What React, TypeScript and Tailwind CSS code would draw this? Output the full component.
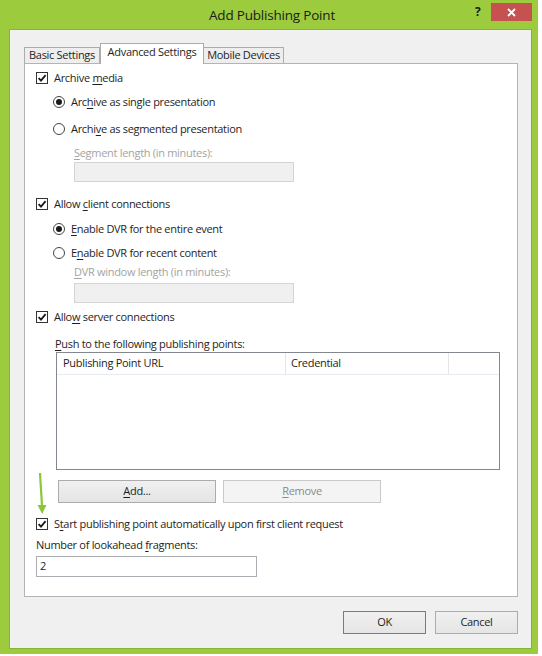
import React from 'react';

const font = "font-['Segoe_UI','Open_Sans',sans-serif] text-[11px] tracking-[-0.3px] text-[#1e1e1e]";

const CheckBox = () => (
  <span className="w-[12px] h-[12px] border border-[#333] bg-white flex items-center justify-center shrink-0">
    <svg width="10" height="10" viewBox="0 0 10 10">
      <path d="M1.6 5.2 L4 7.6 L8.6 2.2" stroke="#1a1a1a" strokeWidth="1.8" fill="none" />
    </svg>
  </span>
);

const Radio = ({ on }: { on?: boolean }) => (
  <span className="w-[12px] h-[12px] rounded-full border border-[#444] bg-white flex items-center justify-center shrink-0">
    {on && <span className="w-[6px] h-[6px] rounded-full bg-[#1a1a1a]" />}
  </span>
);

const U = ({ children }: { children: React.ReactNode }) => (
  <span className="underline underline-offset-[1.5px]">{children}</span>
);

const CheckRow = ({ mt, children }: { mt: string; children: React.ReactNode }) => (
  <div className={`${mt} h-[16px] flex items-center pl-[11px] gap-[6px]`}>
    <CheckBox />
    <span>{children}</span>
  </div>
);

const RadioRow = ({ mt, on, children }: { mt: string; on?: boolean; children: React.ReactNode }) => (
  <div className={`${mt} h-[16px] flex items-center pl-[28px] gap-[6px]`}>
    <Radio on={on} />
    <span>{children}</span>
  </div>
);

const Button = ({ children, disabled, primary, w }: { children: React.ReactNode; disabled?: boolean; primary?: boolean; w: string }) => (
  <div
    className={`${w} h-[23px] flex items-center justify-center border ${
      disabled
        ? 'border-[#c9c9c9] bg-[#f4f4f4] text-[#8a8a8a]'
        : primary
        ? 'border-[#3c8bd0] bg-gradient-to-b from-[#f0f0f0] to-[#e5e5e5]'
        : 'border-[#acacac] bg-gradient-to-b from-[#f0f0f0] to-[#e5e5e5]'
    }`}
  >
    {children}
  </div>
);

export default function App() {
  return (
    <div className={`w-[542px] h-[656px] bg-white ${font}`}>
      <div className="w-[538px] h-[654px] bg-[#9ccb3d] flex flex-col">
        {/* Title bar */}
        <div className="h-[30px] relative flex items-center justify-center">
          <span className="ml-[6px] text-[13.5px] tracking-[-0.2px] text-[#1b1b1b]">Add Publishing Point</span>
          <span className="absolute left-[475px] top-[3px] text-[12px] font-bold text-[#1b1b1b]">?</span>
          <div className="absolute left-[491px] top-[3px] w-[41px] h-[18px] bg-[#c75050] flex items-center justify-center">
            <svg width="9" height="9" viewBox="0 0 9 9">
              <path d="M1 1 L8 8 M8 1 L1 8" stroke="#fff" strokeWidth="1.8" />
            </svg>
          </div>
        </div>

        {/* Client area */}
        <div className="ml-[10px] w-[521px] h-[618px] bg-[#f0f0f0] shadow-[0_0_0_1px_#86b535] flex flex-col">
          {/* Tabs */}
          <div className="mt-[13px] ml-[14px] h-[20px] flex items-end">
            <div className="w-[76px] h-[16px] border border-b-0 border-[#acacac] bg-[#eeeeee] flex items-center justify-center">
              Basic Settings
            </div>
            <div className="relative z-10 -mb-px w-[104px] h-[21px] border border-b-0 border-[#acacac] bg-white flex items-center justify-center pb-[3px]">
              Advanced Settings
            </div>
            <div className="w-[80px] h-[16px] border border-b-0 border-l-0 border-[#acacac] bg-[#eeeeee] flex items-center justify-center">
              Mobile Devices
            </div>
          </div>

          {/* Tab panel */}
          <div className="relative ml-[14px] w-[494px] h-[534px] border border-[#b4b4b4] bg-white flex flex-col">
            <CheckRow mt="mt-[6px]">Archive <U>m</U>edia</CheckRow>
            <RadioRow mt="mt-[8px]" on>Arc<U>h</U>ive as single presentation</RadioRow>
            <RadioRow mt="mt-[11px]">Archi<U>v</U>e as segmented presentation</RadioRow>
            <div className="mt-[8px] h-[16px] flex items-center pl-[49px] text-[#a3a3a3]">
              <span><U>S</U>egment length (in minutes):</span>
            </div>
            <div className="mt-[1px] ml-[49px] w-[220px] h-[20px] border border-[#d4d4d4] bg-[#f0f0f0]" />

            <CheckRow mt="mt-[14px]">Allow <U>c</U>lient connections</CheckRow>
            <RadioRow mt="mt-[9px]" on><U>E</U>nable DVR for the entire event</RadioRow>
            <RadioRow mt="mt-[8px]">E<U>n</U>able DVR for recent content</RadioRow>
            <div className="mt-[3px] h-[16px] flex items-center pl-[49px] text-[#a3a3a3]">
              <span><U>D</U>VR window length (in minutes):</span>
            </div>
            <div className="mt-[3px] ml-[49px] w-[220px] h-[20px] border border-[#d4d4d4] bg-[#f0f0f0]" />

            <CheckRow mt="mt-[6px]">Allo<U>w</U> server connections</CheckRow>
            <div className="mt-[11px] h-[16px] flex items-center pl-[30px]">
              <span><U>P</U>ush to the following publishing points:</span>
            </div>
            <div className="ml-[31px] w-[444px] h-[118px] border border-[#828790] bg-white flex flex-col">
              <div className="h-[22px] flex border-b border-[#e8ecf2]">
                <div className="w-[229px] border-r border-[#e5e5e5] flex items-center pl-[6px]">Publishing Point URL</div>
                <div className="w-[163px] border-r border-[#e5e5e5] flex items-center pl-[5px]">Credential</div>
                <div className="flex-1" />
              </div>
            </div>

            <div className="mt-[10px] ml-[33px] flex gap-[7px]">
              <Button w="w-[158px]"><U>A</U>dd...</Button>
              <Button w="w-[158px]" disabled><U>R</U>emove</Button>
            </div>

            <CheckRow mt="mt-[13px]">S<U>t</U>art publishing point automatically upon first client request</CheckRow>
            <div className="mt-[5px] h-[16px] flex items-center pl-[11px]">
              <span>Number of lookahead <U>f</U>ragments:</span>
            </div>
            <div className="mt-[3px] ml-[11px] w-[221px] h-[21px] border border-[#abadb3] bg-white flex items-center pl-[3px]">
              2
            </div>

            {/* green annotation arrow */}
            <svg className="absolute left-[11px] top-[409px]" width="12" height="42" viewBox="0 0 12 42">
              <path d="M4 0 L6 33" stroke="#8cc63f" strokeWidth="2.2" fill="none" />
              <path d="M1.5 32 L10.5 32 L6.2 41 Z" fill="#8cc63f" />
            </svg>
          </div>

          {/* Dialog buttons */}
          <div className="mt-[14px] pr-[13px] flex justify-end gap-[9px]">
            <Button w="w-[83px]" primary>OK</Button>
            <Button w="w-[83px]">Cancel</Button>
          </div>
        </div>
      </div>
    </div>
  );
}
